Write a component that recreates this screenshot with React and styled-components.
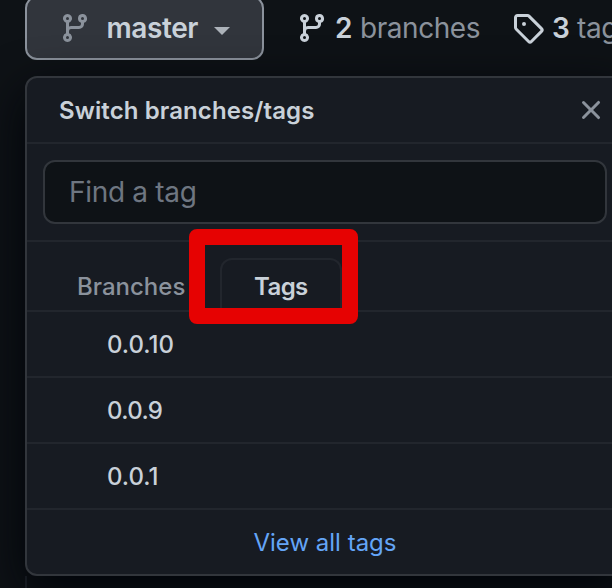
import React from "react";
import styled, { createGlobalStyle } from "styled-components";

const Global = createGlobalStyle`
  *, *::before, *::after { box-sizing: border-box; }
  html, body { margin: 0; height: 588px; overflow: hidden; background: #0e1216; }
  body { font-family: Inter, "Liberation Sans", sans-serif; color: #c9d1d9; }
`;

const Page = styled.div`
  position: relative;
  height: 588px;
  padding-left: 25px;
  overflow: hidden;
`;

const Toolbar = styled.div`
  display: flex;
  align-items: center;
  width: 700px;
  height: 64px;
  margin-top: -4px;
`;

const BranchButton = styled.button`
  display: flex;
  align-items: center;
  flex: none;
  width: 239px;
  height: 64px;
  padding: 0 0 0 32px;
  border: 2px solid #8b929c;
  border-radius: 12px;
  background: #31353c;
  color: #c9d1d9;
  font: inherit;
  text-align: left;
`;

const Icon = styled.svg`
  display: block;
  flex: none;
  width: 32px;
  height: 32px;
  fill: ${(p) => p.$color || "#c9d1d9"};
`;

const Label = styled.span`
  flex: none;
  width: ${(p) => (p.$width ? `${p.$width}px` : "auto")};
  margin-left: ${(p) => p.$gap || 0}px;
  padding-top: ${(p) => p.$drop || 0}px;
  font-size: ${(p) => p.$size || 24}px;
  font-weight: ${(p) => p.$weight || 400};
  letter-spacing: ${(p) => p.$track || 0}px;
  line-height: 36px;
  color: ${(p) => p.$color || "#c9d1d9"};
  white-space: pre;
`;

const Caret = styled.span`
  margin-top: 6px;
  border: 8px solid transparent;
  border-top-color: #acb2b9;
  border-bottom: 0;
`;

const CountLink = styled.a`
  display: flex;
  align-items: center;
  flex: none;
  margin-left: ${(p) => p.$gap}px;
`;

const Menu = styled.section`
  position: relative;
  width: 600px;
  height: 500px;
  margin-top: 16px;
  border: 2px solid #32363c;
  border-radius: 12px;
  background: #171b22;
  box-shadow: 0 16px 48px #010409;
`;

const MenuHeader = styled.header`
  display: flex;
  align-items: center;
  justify-content: space-between;
  height: 66px;
  padding: 0 16px 0 32px;
  border-bottom: 2px solid #22262d;
`;

const Filter = styled.div`
  height: 98px;
  padding: 16px;
  border-bottom: 2px solid #22262d;
`;

const FilterField = styled.div`
  display: flex;
  align-items: center;
  width: 564px;
  height: 64px;
  padding-left: 24px;
  border: 2px solid #32363c;
  border-radius: 12px;
  background: #0e1216;
`;

const Tabs = styled.nav`
  display: flex;
  align-items: flex-end;
  height: 70px;
  padding-left: 16px;
  border-bottom: 2px solid #22262d;
`;

const Tab = styled.div`
  display: flex;
  align-items: center;
  flex: none;
  width: ${(p) => p.$width}px;
  height: 54px;
  margin-bottom: -2px;
  padding: 2px 0 0 32px;
  border: 2px solid ${(p) => (p.$active ? "#22262d" : "transparent")};
  border-bottom: 0;
  border-radius: 12px 12px 0 0;
`;

const TagRow = styled.div`
  display: flex;
  align-items: center;
  height: 66px;
  padding-left: 80px;
  border-bottom: 2px solid #22262d;
`;

const Footer = styled.footer`
  display: flex;
  align-items: center;
  justify-content: center;
  height: 64px;
`;

const PanelEdge = styled.div`
  width: 2px;
  height: 12px;
  background: #21262d;
`;

const Highlight = styled.div`
  position: absolute;
  left: 189px;
  top: 229px;
  width: 169px;
  height: 95px;
  border-radius: 8px;
  border: 16px solid #e60202;
`;

const paths = {
  branch:
    "M11.75 2.5a.75.75 0 100 1.5.75.75 0 000-1.5zm-2.25.75a2.25 2.25 0 113 2.122V6A2.5 2.5 0 0110 8.5H6a1 1 0 00-1 1v1.128a2.251 2.251 0 11-1.5 0V5.372a2.25 2.25 0 111.5 0v1.836A2.492 2.492 0 016 7h4a1 1 0 001-1v-.628A2.25 2.25 0 019.5 3.25zM4.25 12a.75.75 0 100 1.5.75.75 0 000-1.5zM3.5 3.25a.75.75 0 111.5 0 .75.75 0 01-1.5 0z",
  tag: "M2.5 7.775V2.75a.25.25 0 01.25-.25h5.025a.25.25 0 01.177.073l6.25 6.25a.25.25 0 010 .354l-5.025 5.025a.25.25 0 01-.354 0l-6.25-6.25a.25.25 0 01-.073-.177zm-1.5 0V2.75C1 1.784 1.784 1 2.75 1h5.025c.464 0 .91.184 1.238.513l6.25 6.25a1.75 1.75 0 010 2.474l-5.026 5.026a1.75 1.75 0 01-2.474 0l-6.25-6.25A1.75 1.75 0 011 7.775zM6 5a1 1 0 100 2 1 1 0 000-2z",
  close:
    "M3.72 3.72a.75.75 0 011.06 0L8 6.94l3.22-3.22a.75.75 0 111.06 1.06L9.06 8l3.22 3.22a.75.75 0 11-1.06 1.06L8 9.06l-3.22 3.22a.75.75 0 01-1.06-1.06L6.94 8 3.72 4.78a.75.75 0 010-1.06z",
};

const Glyph = ({ name, color }) => (
  <Icon viewBox="0 0 16 16" $color={color} aria-hidden="true">
    <path d={paths[name]} fillRule="evenodd" />
  </Icon>
);

const tags = [
  { name: "0.0.10", track: 0 },
  { name: "0.0.9", track: -0.65 },
  { name: "0.0.1", track: 0 },
];

export default function App() {
  return (
    <>
      <Global />
      <Page>
        <Toolbar>
          <BranchButton>
            <Glyph name="branch" color="#8b929c" />
            <Label $size={28} $weight={600} $gap={15.5} $width={107.5} $track={-0.4}>master</Label>
            <Caret />
          </BranchButton>
          <CountLink $gap={32}>
            <Glyph name="branch" />
            <Label $size={28} $weight={600} $gap={7} $width={25}>2</Label>
            <Label $size={28} $color="#8b929c" $width={152} $track={-0.45}>branches</Label>
          </CountLink>
          <CountLink $gap={0}>
            <Glyph name="tag" />
            <Label $size={28} $weight={600} $gap={8} $width={25}>3</Label>
            <Label $size={28} $color="#8b929c" $track={-0.4}>tags</Label>
          </CountLink>
        </Toolbar>
        <Menu>
          <MenuHeader>
            <Label $weight={600} $track={0.1} $drop={2}>Switch branches/tags</Label>
            <Glyph name="close" color="#8b929c" />
          </MenuHeader>
          <Filter>
            <FilterField>
              <Label $size={28} $color="#6e7681" $track={-0.3}>Find a tag</Label>
            </FilterField>
          </Filter>
          <Tabs>
            <Tab $width={177}>
              <Label $weight={500} $color="#8b929c">Branches</Label>
            </Tab>
            <Tab $width={122} $active>
              <Label $weight={600} $track={-0.6}>Tags</Label>
            </Tab>
          </Tabs>
          {tags.map((tag) => (
            <TagRow key={tag.name}>
              <Label $weight={500} $track={tag.track} $drop={2}>{tag.name}</Label>
            </TagRow>
          ))}
          <Footer>
            <Label $color="#64a5f7" $drop={2}>View all tags</Label>
          </Footer>
        </Menu>
        <PanelEdge />
        <Highlight />
      </Page>
    </>
  );
}
